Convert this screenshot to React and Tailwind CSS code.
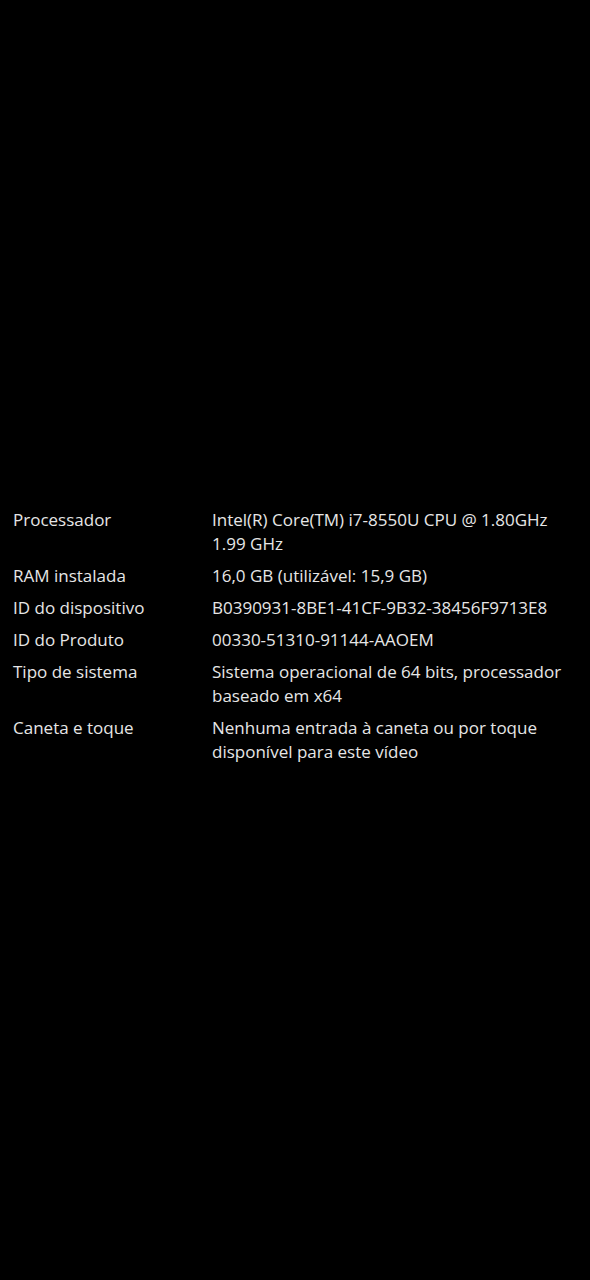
import React from 'react';

const specs = [
  { label: 'Processador', value: ['Intel(R) Core(TM) i7-8550U CPU @ 1.80GHz', '1.99 GHz'] },
  { label: 'RAM instalada', value: ['16,0 GB (utilizável: 15,9 GB)'] },
  { label: 'ID do dispositivo', value: ['B0390931-8BE1-41CF-9B32-38456F9713E8'] },
  { label: 'ID do Produto', value: ['00330-51310-91144-AAOEM'] },
  { label: 'Tipo de sistema', value: ['Sistema operacional de 64 bits, processador', 'baseado em x64'] },
  { label: 'Caneta e toque', value: ['Nenhuma entrada à caneta ou por toque', 'disponível para este vídeo'] },
];

function SpecRow({ label, value }) {
  return (
    <div className="flex">
      <div className="w-[199px] shrink-0">{label}</div>
      <div>
        {value.map((line) => (
          <div key={line} className="whitespace-nowrap">{line}</div>
        ))}
      </div>
    </div>
  );
}

export default function App() {
  return (
    <div
      className="min-h-[1280px] w-full bg-black pl-[13px] pt-[508px] text-[17px] leading-[24px] text-[#e6e6e6]"
      style={{ fontFamily: '"Open Sans", "Noto Sans", sans-serif' }}
    >
      <div className="flex flex-col gap-2">
        {specs.map((s) => (
          <SpecRow key={s.label} {...s} />
        ))}
      </div>
    </div>
  );
}
